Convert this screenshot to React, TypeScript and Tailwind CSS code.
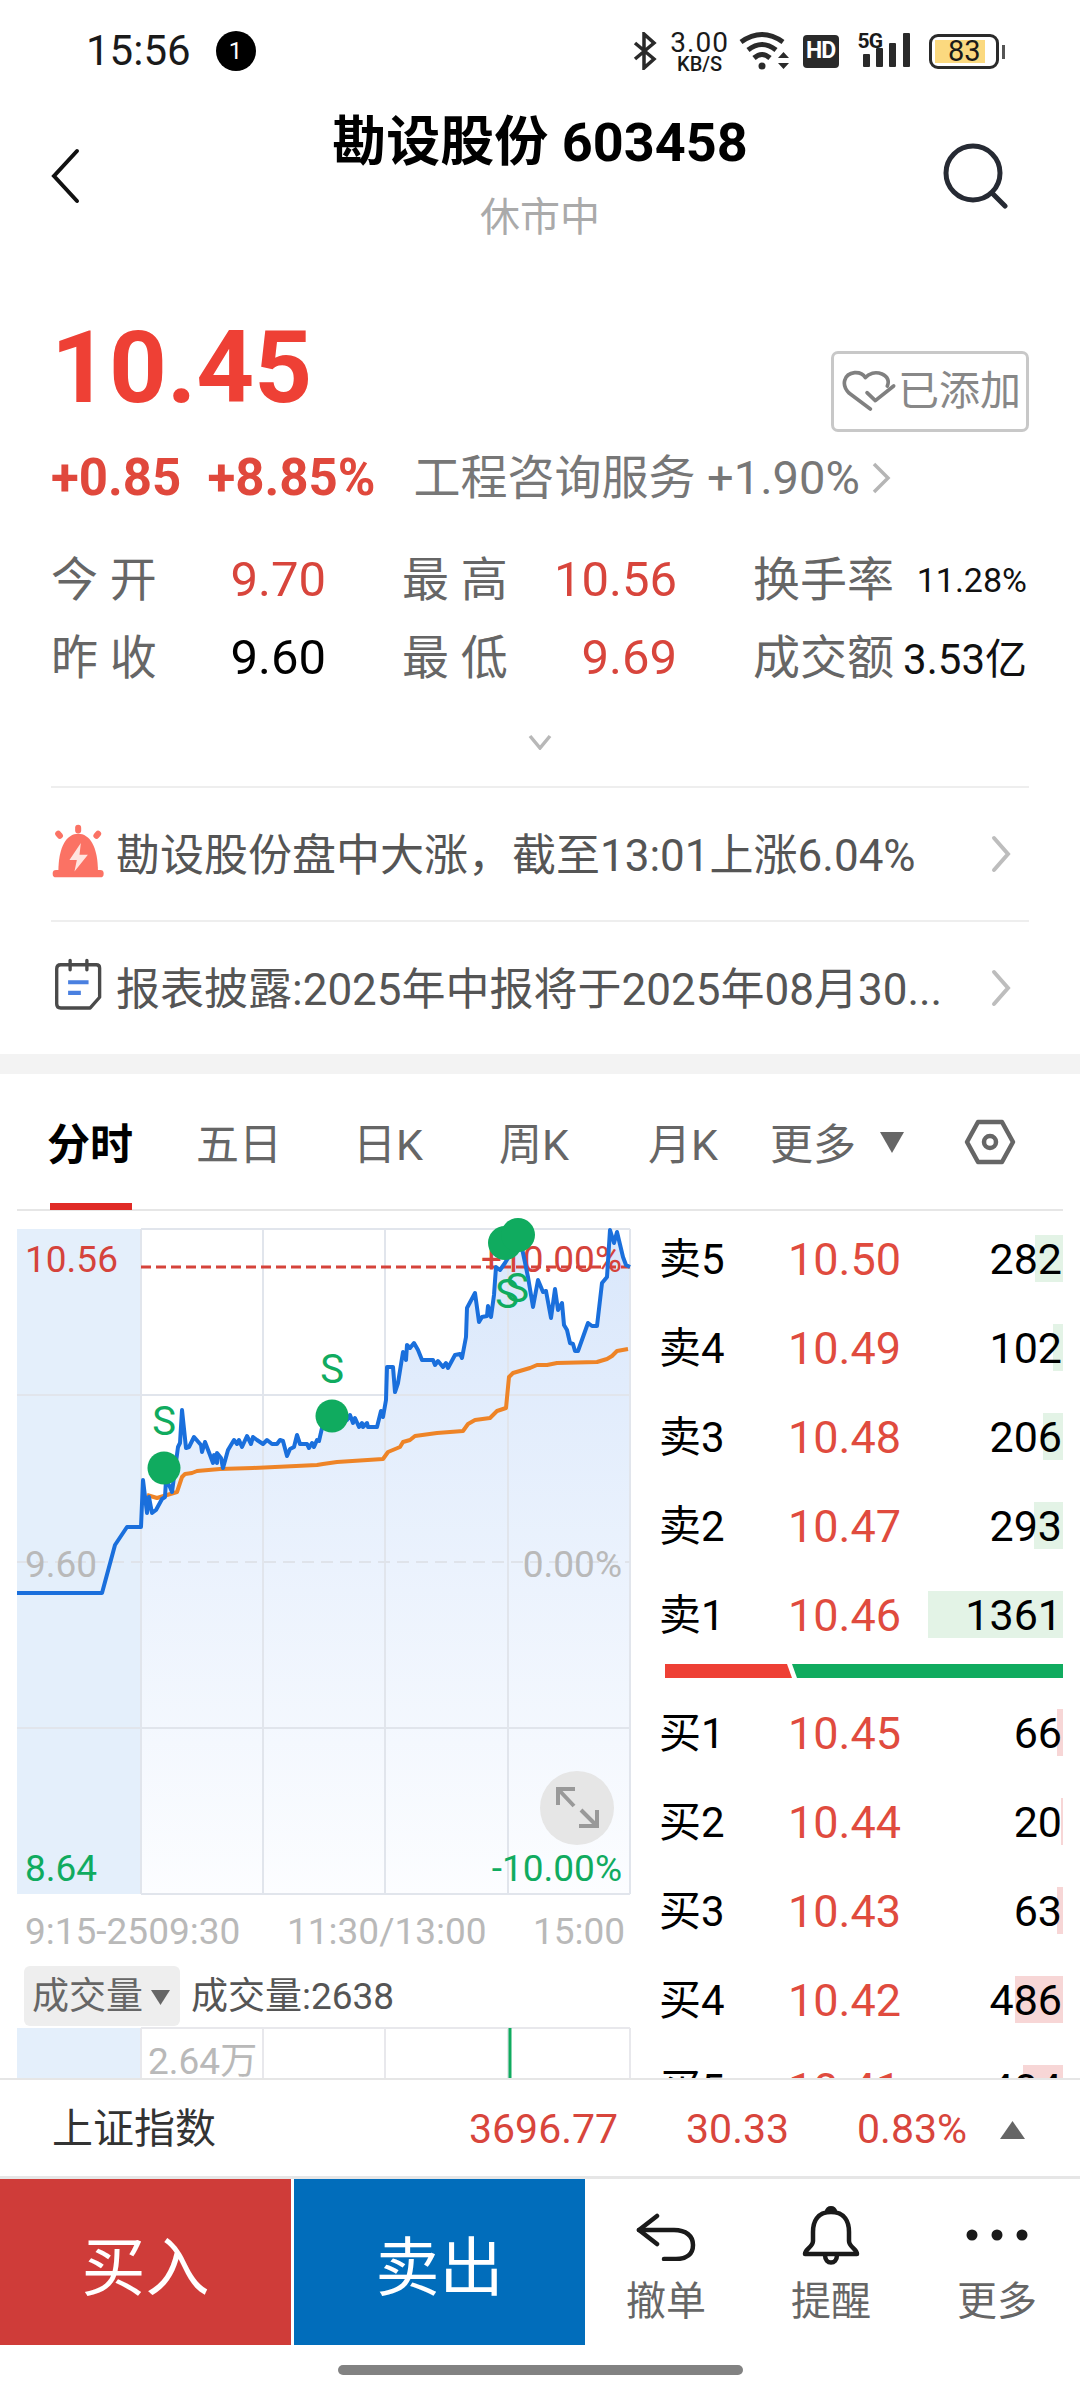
const BLUE_LINE =
  "17,1593 102,1593 115,1545 127,1527 141,1527 143,1480 147,1513 149,1497 152,1513 156,1510 162,1499 165,1497 166,1480 170,1487 172,1492 178,1447 180,1443 182,1410 186,1448 189,1447 194,1437 201,1445 202,1452 205,1442 210,1455 213,1463 214,1455 217,1463 217,1453 221,1458 223,1468 228,1450 234,1440 237,1444 239,1440 242,1447 247,1436 251,1444 253,1437 257,1440 263,1444 267,1440 272,1444 277,1444 280,1440 283,1441 287,1456 290,1449 294,1447 297,1435 300,1444 307,1444 309,1448 312,1443 314,1447 317,1440 319,1441 322,1428 332,1417 347,1420 350,1415 353,1423 355,1418 359,1427 362,1423 363,1427 367,1423 368,1427 377,1427 381,1411 383,1417 386,1400 387,1367 393,1367 395,1392 398,1383 403,1352 406,1360 407,1345 410,1348 414,1343 418,1350 422,1360 433,1360 435,1365 438,1361 443,1367 446,1363 448,1368 455,1355 460,1354 462,1358 466,1337 467,1308 475,1293 479,1322 482,1317 487,1316 488,1306 491,1317 494,1295 496,1267 500,1270 505,1263 508,1258 520,1240 523,1253 528,1277 533,1307 538,1280 543,1292 546,1291 551,1318 555,1289 558,1310 562,1303 564,1325 567,1330 570,1343 573,1344 575,1351 578,1351 588,1323 592,1326 597,1326 602,1283 607,1277 610,1230 614,1243 617,1232 623,1257 626,1265 630,1267";

const ORANGE_LINE =
  "147,1495 157,1498 167,1495 177,1492 182,1477 185,1474 192,1473 197,1471 220,1469 253,1468 317,1465 323,1464 337,1462 383,1459 388,1452 400,1447 403,1442 410,1440 415,1436 437,1433 463,1431 468,1424 475,1420 490,1418 497,1411 506,1408 509,1377 513,1373 530,1368 537,1365 547,1365 557,1363 597,1362 607,1359 612,1356 617,1351 628,1349";

const FILL_AREA =
  "141,1894 " + BLUE_LINE.slice(BLUE_LINE.indexOf("141,1527")) + " 630,1894";

const SELL = [
  { name: "卖5", price: "10.50", vol: "282", bar: 28 },
  { name: "卖4", price: "10.49", vol: "102", bar: 10 },
  { name: "卖3", price: "10.48", vol: "206", bar: 20 },
  { name: "卖2", price: "10.47", vol: "293", bar: 29 },
  { name: "卖1", price: "10.46", vol: "1361", bar: 135 },
];

const BUY = [
  { name: "买1", price: "10.45", vol: "66", bar: 6 },
  { name: "买2", price: "10.44", vol: "20", bar: 2 },
  { name: "买3", price: "10.43", vol: "63", bar: 6 },
  { name: "买4", price: "10.42", vol: "486", bar: 48 },
  { name: "买5", price: "10.41", vol: "404", bar: 40 },
];

function StatusBar() {
  return (
    <div className="h-[100px] shrink-0 flex items-center pl-[86px] pt-[2px] text-[#1a1a1a]">
      <span className="text-[42px] leading-none">15:56</span>
      <span className="ml-[25px] w-[40px] h-[40px] rounded-full bg-black text-white text-[24px] flex items-center justify-center">1</span>
      {/* bluetooth */}
      <svg className="ml-[377px]" width="24" height="38" viewBox="0 0 24 38" fill="none" stroke="#2a2a2a" strokeWidth="3.5">
        <path d="M2 11 L21 27 L11 36 L11 2 L21 11 L2 27" />
      </svg>
      <div className="ml-[14px] w-[58px] flex flex-col items-center">
        <span className="text-[28px] leading-[25px] tracking-[1px]">3.00</span>
        <span className="text-[20px] leading-[18px] font-medium">KB/S</span>
      </div>
      {/* wifi */}
      <svg className="ml-[10px]" width="52" height="40" viewBox="0 0 52 40" fill="none" stroke="#2a2a2a" strokeWidth="5">
        <path d="M2 11 Q23 -4 44 11" />
        <path d="M9 19 Q23 8 37 19" />
        <path d="M15 27 Q23 20 31 27" />
        <circle cx="23" cy="35" r="3.5" fill="#2a2a2a" stroke="none" />
        <path d="M39 27 L44.500 21 L50 27 Z M39 32 L50 32 L44.500 38 Z" fill="#2a2a2a" stroke="none" />
      </svg>
      <span className="ml-[12px] w-[36px] h-[33px] rounded-[4px] bg-[#2a2a2a] text-white text-[23px] font-bold tracking-[-1px] flex items-center justify-center">HD</span>
      {/* 5G + signal */}
      <div className="ml-[19px] w-[53px] h-[36px] relative">
        <svg className="absolute left-0 top-0" width="53" height="36" viewBox="0 0 53 36" fill="#2a2a2a">
          <rect x="5" y="21" width="7" height="13" rx="1" />
          <rect x="18" y="15" width="7" height="19" rx="1" />
          <rect x="31" y="10" width="7" height="24" rx="1" />
          <rect x="45" y="0" width="7" height="34" rx="1" />
        </svg>
        <span className="absolute left-0 top-[-3px] text-[21px] leading-[22px] font-bold tracking-[-1px]">5G</span>
      </div>
      {/* battery */}
      <div className="ml-[18px] w-[70px] h-[35px] border-[3px] border-[#2a2a2a] rounded-[9px] p-[3px] relative">
        <div className="w-[50px] h-full bg-[#fbd97f] flex items-center justify-end pr-[4px] text-[29px] leading-none">83</div>
        <div className="absolute right-[-9px] top-[8px] w-[3px] h-[14px] bg-[#555]" />
      </div>
    </div>
  );
}

function NavBar() {
  return (
    <div className="h-[152px] shrink-0 flex items-center justify-between pl-[50px] pr-[70px]">
      <svg width="30" height="56" viewBox="0 0 30 56" fill="none" stroke="#111" strokeWidth="4" strokeLinecap="round">
        <path d="M27 3 L4 28 L27 53" />
      </svg>
      <div className="flex flex-col items-center ml-[58px] pt-[3px]">
        <div className="text-[54px] leading-[60px] font-bold text-black">勘设股份 603458</div>
        <div className="mt-[20px] text-[40px] leading-[50px] text-[#aaaaaa]">休市中</div>
      </div>
      <svg width="68" height="66" viewBox="0 0 68 66" fill="none" stroke="#262a33" strokeWidth="5" strokeLinecap="round">
        <circle cx="31" cy="30" r="27" />
        <path d="M50 50 L63 63" />
      </svg>
    </div>
  );
}

function Stat({ label, value, color, className = "" }: { label: string; value: string; color: string; className?: string }) {
  return (
    <div className={`w-[275px] flex items-center justify-between ${className}`}>
      <span className="text-[47px] text-[#666666]">{label}</span>
      <span className={`text-[49px] ${color}`}>{value}</span>
    </div>
  );
}

function Quote() {
  return (
    <div className="px-[51px]">
      <div className="pt-[66px] h-[180px] flex justify-between items-start">
        <span className="text-[101px] leading-[100px] font-bold text-[#ee4035]">10.45</span>
        <div className="mt-[33px] w-[198px] h-[81px] border-[3px] border-[#c8c8c8] rounded-[7px] flex items-center">
          <svg className="ml-[8px]" width="56" height="56" viewBox="50 60 168 168" fill="none" stroke="#808080" strokeWidth="11" strokeLinecap="round" strokeLinejoin="round">
            <path d="M135 195 L72 148 C46 122 56 90 88 86 C103 85 114 91 120 101 C130 88 150 82 170 90 C188 98 192 112 186 126" />
            <path d="M125 146 L150 170 L205 126" />
          </svg>
          <span className="text-[41px] leading-none text-[#888888]">已添加</span>
        </div>
      </div>
      <div className="mt-[21px] h-[50px] flex items-center">
        <span className="text-[51px] font-bold text-[#e0483c]">+0.85</span>
        <span className="ml-[26px] text-[51px] font-bold text-[#e0483c]">+8.85%</span>
        <span className="ml-[38px] text-[47px] text-[#777777]">工程咨询服务 +1.90%</span>
        <svg className="ml-[11px]" width="20" height="32" viewBox="0 0 20 32" fill="none" stroke="#b5b5b5" strokeWidth="3.500">
          <path d="M3 2 L17 16 L3 30" />
        </svg>
      </div>
      <div className="mt-[47px] h-[60px] flex items-center">
        <Stat label="今 开" value="9.70" color="text-[#d8453c]" />
        <Stat label="最 高" value="10.56" color="text-[#d8453c]" className="ml-[76px]" />
        <div className="ml-[76px] w-[274px] flex items-center justify-between">
          <span className="text-[47px] text-[#666666]">换手率</span>
          <span className="text-[34px] text-[#111111]">11.28%</span>
        </div>
      </div>
      <div className="mt-[18px] h-[60px] flex items-center">
        <Stat label="昨 收" value="9.60" color="text-black" />
        <Stat label="最 低" value="9.69" color="text-[#d8453c]" className="ml-[76px]" />
        <div className="ml-[76px] w-[274px] flex items-center justify-between">
          <span className="text-[47px] text-[#666666]">成交额</span>
          <span className="text-[42px] text-[#111111] pt-[3px]">3.53亿</span>
        </div>
      </div>
      <div className="h-[98px] flex items-center justify-center pt-[10px]">
        <svg width="24" height="16" viewBox="0 0 24 16" fill="none" stroke="#b8b8b8" strokeWidth="3.500">
          <path d="M2 2 L12 14 L22 2" />
        </svg>
      </div>
    </div>
  );
}

function NoticeRow({ icon, text }: { icon: React.ReactNode; text: string }) {
  return (
    <div className="h-[134px] border-t-2 border-[#eeeeee] flex items-center">
      <div className="w-[57px] shrink-0 ml-[-1px] mt-[-6px]">{icon}</div>
      <span className="ml-[9px] pt-[4px] w-[875px] shrink-0 text-[44px] text-[#555555] whitespace-nowrap">{text}</span>
      <svg width="20" height="38" viewBox="0 0 20 38" fill="none" stroke="#bdbdbd" strokeWidth="4" strokeLinecap="round">
        <path d="M3 3 L17 19 L3 35" />
      </svg>
    </div>
  );
}

function AlarmIcon() {
  return (
    <svg width="57" height="57" viewBox="30 40 170 170" fill="#fb7264">
      <path d="M55 185 C55 110 80 72 114 72 C148 72 173 110 173 185 Z" />
      <rect x="38" y="180" width="152" height="22" rx="10" />
      <rect x="105" y="45" width="18" height="26" rx="9" />
      <rect x="48" y="62" width="18" height="26" rx="9" transform="rotate(-40 57 75)" />
      <rect x="162" y="62" width="18" height="26" rx="9" transform="rotate(40 171 75)" />
      <path d="M122 100 L88 150 L110 150 L103 185 L143 135 L118 135 Z" fill="#ffe4df" />
    </svg>
  );
}

function NoteIcon() {
  return (
    <svg width="57" height="57" viewBox="30 450 170 170" fill="none" stroke="#4a4a4a" strokeWidth="10" strokeLinecap="round" strokeLinejoin="round">
      <path d="M62 473 L168 473 Q178 473 178 483 L178 570 L150 602 L62 602 Q50 602 50 590 L50 485 Q50 473 62 473 Z" />
      <path d="M90 460 L90 488 M140 460 L140 488" />
      <path d="M84 525 L145 525 M84 557 L122 557" stroke="#4a80e0" strokeWidth="12" strokeLinecap="butt" />
    </svg>
  );
}

function Tabs() {
  return (
    <div className="h-[137px] shrink-0 ml-[17px] w-[1046px] border-b-2 border-[#e6e6e6] flex items-center pl-[30px] pt-[8px] text-[43px] text-[#666666] relative">
      <span className="font-bold text-black">分时</span>
      <span className="ml-[63px]">五日</span>
      <span className="ml-[71px]">日K</span>
      <span className="ml-[76px]">周K</span>
      <span className="ml-[79px]">月K</span>
      <span className="ml-[52px]">更多</span>
      <svg className="ml-[24px] mb-[6px]" width="24" height="21" viewBox="0 0 24 21" fill="#666666">
        <path d="M0 0 L24 0 L12 21 Z" />
      </svg>
      <svg className="ml-[60px] mb-[8px]" width="52" height="46" viewBox="0 0 52 46" fill="none" stroke="#666666" strokeWidth="4.500">
        <path d="M14 3 L38 3 L49 23 L38 43 L14 43 L3 23 Z" strokeLinejoin="round" />
        <circle cx="26" cy="23" r="6" />
      </svg>
      <div className="absolute left-[33px] bottom-[-1px] w-[82px] h-[7px] bg-[#e02a26]" />
    </div>
  );
}

function PriceChart() {
  const textCls = "text-[37px]";
  return (
    <svg className="block" width="640" height="690" viewBox="0 1215 640 690" overflow="visible">
      <defs>
        <linearGradient id="area" gradientUnits="userSpaceOnUse" x1="0" y1="1229" x2="0" y2="1894">
          <stop offset="0" stopColor="#d9e7fb" />
          <stop offset="1" stopColor="#fcfdff" />
        </linearGradient>
      </defs>
      <rect x="17" y="1229" width="124" height="665" fill="#e4effb" />
      <polygon points={FILL_AREA} fill="url(#area)" />
      {/* grid */}
      <g stroke="#e1e5ec" strokeWidth="2">
        <path d="M141 1229 L630 1229 M17 1395 L630 1395 M17 1728 L630 1728 M141 1894 L630 1894" />
        <path d="M141 1229 L141 1894 M263 1229 L263 1894 M385 1229 L385 1894 M508 1229 L508 1894 M630 1229 L630 1894" />
      </g>
      <path d="M17 1562 L630 1562" stroke="#dfe3ea" strokeWidth="2" strokeDasharray="12 7" />
      <text x="25" y="1272" fill="#d5433b" className={textCls}>10.56</text>
      <text x="622" y="1272" textAnchor="end" fill="#d5433b" className={textCls}>+10.00%</text>
      <text x="25" y="1577" fill="#b9b9b9" className={textCls}>9.60</text>
      <text x="622" y="1577" textAnchor="end" fill="#b9b9b9" className={textCls}>0.00%</text>
      <text x="25" y="1881" fill="#10ab5f" className={textCls}>8.64</text>
      <text x="622" y="1881" textAnchor="end" fill="#10ab5f" className={textCls}>-10.00%</text>
      <path d="M141 1267 L630 1267" stroke="#d5433b" strokeWidth="3" strokeDasharray="10 5" />
      <polyline points={ORANGE_LINE} fill="none" stroke="#ee8427" strokeWidth="4" strokeLinejoin="round" />
      <polyline points={BLUE_LINE} fill="none" stroke="#1a6fdc" strokeWidth="4" strokeLinejoin="round" />
      {/* trade markers */}
      <g fill="#10ab5f">
        <circle cx="164" cy="1468" r="16.500" />
        <circle cx="332" cy="1416" r="16.500" />
        <circle cx="505" cy="1243" r="17" />
        <circle cx="518" cy="1235" r="17" />
        <text x="164" y="1435" textAnchor="middle" className="text-[40px]">S</text>
        <text x="332" y="1383" textAnchor="middle" className="text-[40px]">S</text>
        <text x="507" y="1308" textAnchor="middle" className="text-[40px]">S</text>
        <text x="517" y="1302" textAnchor="middle" className="text-[40px]">S</text>
      </g>
      {/* expand button */}
      <circle cx="577" cy="1808" r="37" fill="#e6e6e6" />
      <path d="M575 1789 L558 1789 L558 1805 M558 1789 L574 1806 M597 1810 L597 1826 L579 1826 M597 1826 L581 1810" fill="none" stroke="#999999" strokeWidth="4" />
    </svg>
  );
}

function VolumeSection() {
  return (
    <>
      <div className="h-[54px] pl-[25px] flex items-center text-[37px] text-[#b9b9b9] whitespace-nowrap">
        <span className="w-[262px]">9:15-2509:30</span>
        <span className="w-[246px]">11:30/13:00</span>
        <span>15:00</span>
      </div>
      <div className="h-[67px] pl-[24px] flex items-center text-[37px] text-[#555555]">
        <div className="mt-[7px] w-[156px] h-[60px] bg-[#eeeeee] rounded-[6px] pl-[8px] pt-[2px] flex items-center">
          <span className="text-[#666666]">成交量</span>
          <svg className="ml-[8px]" width="19" height="15" viewBox="0 0 19 15" fill="#666666">
            <path d="M0 0 L19 0 L9.500 15 Z" />
          </svg>
        </div>
        <span className="ml-[11px] mt-[9px]">成交量:2638</span>
      </div>
      <svg className="block" width="640" height="52" viewBox="0 2027 640 52">
        <rect x="17" y="2029" width="124" height="50" fill="#e4effb" />
        <g stroke="#e8e8ec" strokeWidth="2">
          <path d="M141 2029 L630 2029" />
          <path d="M141 2029 L141 2079 M263 2029 L263 2079 M385 2029 L385 2079 M508 2029 L508 2079 M630 2029 L630 2079" />
        </g>
        <path d="M510 2029 L510 2079" stroke="#10ab5f" strokeWidth="3" />
        <text x="148" y="2075" fill="#b9b9b9" className="text-[37px]">2.64万</text>
      </svg>
    </>
  );
}

function BookRow({ name, price, vol, bar, barColor }: { name: string; price: string; vol: string; bar: number; barColor: string }) {
  return (
    <div className="h-[89px] shrink-0 flex items-center relative pt-[2px] text-[42px]">
      <span className="absolute right-0 top-[21px] h-[47px]" style={{ width: bar, backgroundColor: barColor }} />
      <span className="relative w-[148px] pl-[19px] text-black">{name}</span>
      <span className="relative text-[45px] text-[#e04b3e]">{price}</span>
      <span className="relative ml-auto pr-[1px] text-[43px] text-black">{vol}</span>
    </div>
  );
}

function OrderBook() {
  return (
    <div className="w-[423px] pt-[3px] flex flex-col">
      {SELL.map((r) => (
        <BookRow key={r.name} {...r} barColor="#e3f3e6" />
      ))}
      <div className="h-[14px] shrink-0 mt-[5px] ml-[25px] flex">
        <div className="w-[127px] bg-[#ee4035] [clip-path:polygon(0_0,122px_0,100%_100%,0_100%)]" />
        <div className="flex-1 bg-[#10ab5f] [clip-path:polygon(0_0,100%_0,100%_100%,5px_100%)]" />
      </div>
      <div className="h-[10px] shrink-0" />
      {BUY.map((r) => (
        <BookRow key={r.name} {...r} barColor="#f7d6d6" />
      ))}
    </div>
  );
}

function IndexBar() {
  return (
    <div className="h-[101px] shrink-0 border-t-2 border-b-[3px] border-[#e6e6e6] bg-white pl-[52px] pt-[4px] flex items-center text-[41px]">
      <span className="text-[#333333] w-[417px]">上证指数</span>
      <span className="text-[#d8453c]">3696.77</span>
      <span className="ml-[68px] text-[#d8453c]">30.33</span>
      <span className="ml-[68px] text-[#d8453c]">0.83%</span>
      <svg className="ml-[33px]" width="25" height="18" viewBox="0 0 25 18" fill="#666666">
        <path d="M12.500 0 L25 18 L0 18 Z" />
      </svg>
    </div>
  );
}

function ActionItem({ label, className, children }: { label: string; className: string; children: React.ReactNode }) {
  return (
    <div className={`w-[80px] flex flex-col items-center ${className}`}>
      <div className="h-[92px] flex items-end pb-[6px]">{children}</div>
      <span className="leading-[60px] pt-[1px]">{label}</span>
    </div>
  );
}

function ActionBar() {
  return (
    <div className="h-[166px] shrink-0 flex">
      <div className="w-[291px] pt-[14px] bg-[#cf3c39] text-white text-[64px] flex items-center justify-center">买入</div>
      <div className="ml-[3px] w-[291px] pt-[14px] bg-[#016dbb] text-white text-[64px] flex items-center justify-center">卖出</div>
      <div className="flex-1 flex text-[40px] text-[#666666]">
        <ActionItem className="ml-[41px]" label="撤单">
          <svg className="mb-[4px]" width="60" height="48" viewBox="0 0 60 48" fill="none" stroke="#1a1a1a" strokeWidth="4.500" strokeLinecap="round" strokeLinejoin="round">
            <path d="M21 3 L3 17 L21 31" />
            <path d="M3 17 L38 17 C50 17 57 23 57 32 C57 41 51 46 40 46 L28 46" />
          </svg>
        </ActionItem>
        <ActionItem className="ml-[85px]" label="提醒">
          <svg width="58" height="60" viewBox="0 0 58 60" fill="none" stroke="#1a1a1a" strokeWidth="4.500" strokeLinejoin="round">
            <path d="M29 7 C15 7 11 17 11 27 L11 36 C11 42 3 44 3 49 L55 49 C55 44 47 42 47 36 L47 27 C47 17 43 7 29 7 Z" />
            <path d="M25 7 C25 2 33 2 33 7" />
            <path d="M23 50 C23 60 35 60 35 50" />
          </svg>
        </ActionItem>
        <ActionItem className="ml-[86px]" label="更多">
          <svg width="62" height="60" viewBox="0 0 62 60" fill="#1a1a1a">
            <circle cx="6" cy="30" r="5.500" />
            <circle cx="31" cy="30" r="5.500" />
            <circle cx="56" cy="30" r="5.500" />
          </svg>
        </ActionItem>
      </div>
    </div>
  );
}

export default function App() {
  return (
    <div className="w-[1080px] h-[2400px] flex flex-col bg-white overflow-hidden font-[family-name:Roboto,'Noto_Sans_CJK_SC',sans-serif]">
      <StatusBar />
      <NavBar />
      <Quote />
      <div className="mx-[51px] shrink-0">
        <NoticeRow icon={<AlarmIcon />} text="勘设股份盘中大涨，截至13:01上涨6.04%" />
        <NoticeRow icon={<NoteIcon />} text="报表披露:2025年中报将于2025年08月30..." />
      </div>
      <div className="h-[20px] shrink-0 bg-[#f3f3f3]" />
      <Tabs />
      <div className="h-[867px] shrink-0 flex overflow-hidden">
        <div className="w-[640px] pt-[4px] flex flex-col">
          <PriceChart />
          <VolumeSection />
        </div>
        <OrderBook />
      </div>
      <IndexBar />
      <ActionBar />
      <div className="flex-1 flex justify-center pt-[20px]">
        <div className="w-[405px] h-[10px] rounded-full bg-[#828282]" />
      </div>
    </div>
  );
}
